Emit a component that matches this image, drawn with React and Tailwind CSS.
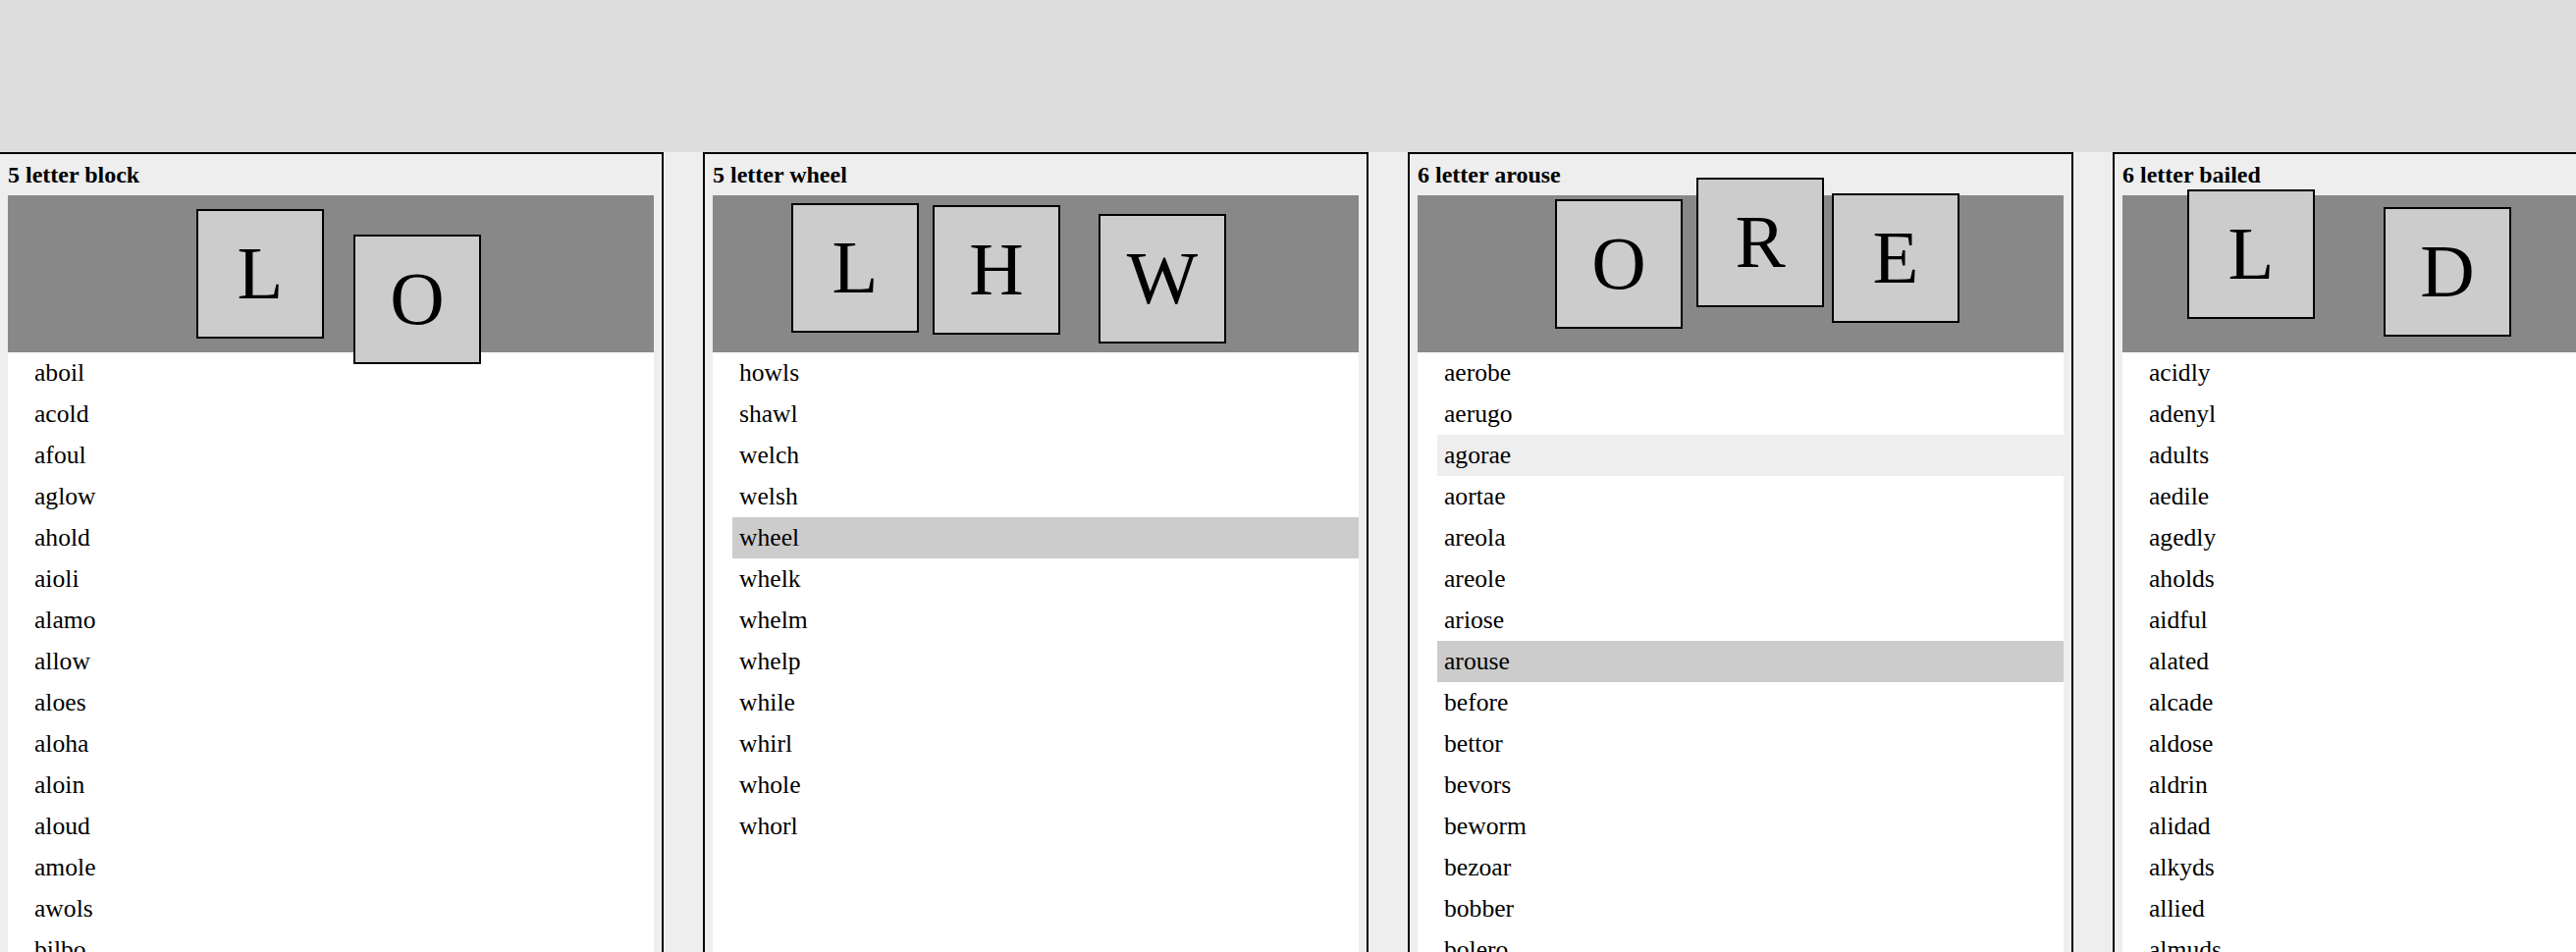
import React from "react";

const panels = [
  {
    title: "5 letter block",
    tiles: [
      { l: "L", x: 192, y: 14 },
      { l: "O", x: 352, y: 40 },
    ],
    words: ["aboil", "acold", "afoul", "aglow", "ahold", "aioli", "alamo", "allow", "aloes", "aloha", "aloin", "aloud", "amole", "awols", "bilbo", "blocs", "bloke"],
    selected: null,
    hover: null,
  },
  {
    title: "5 letter wheel",
    tiles: [
      { l: "L", x: 80, y: 8 },
      { l: "H", x: 224, y: 10 },
      { l: "W", x: 393, y: 19 },
    ],
    words: ["howls", "shawl", "welch", "welsh", "wheel", "whelk", "whelm", "whelp", "while", "whirl", "whole", "whorl"],
    selected: "wheel",
    hover: null,
  },
  {
    title: "6 letter arouse",
    tiles: [
      { l: "O", x: 140, y: 4 },
      { l: "R", x: 284, y: -18 },
      { l: "E", x: 422, y: -2 },
    ],
    words: ["aerobe", "aerugo", "agorae", "aortae", "areola", "areole", "ariose", "arouse", "before", "bettor", "bevors", "beworm", "bezoar", "bobber", "bolero", "borate", "bourse"],
    selected: "arouse",
    hover: "agorae",
  },
  {
    title: "6 letter bailed",
    tiles: [
      { l: "L", x: 66, y: -6 },
      { l: "D", x: 266, y: 12 },
    ],
    words: ["acidly", "adenyl", "adults", "aedile", "agedly", "aholds", "aidful", "alated", "alcade", "aldose", "aldrin", "alidad", "alkyds", "allied", "almuds", "almyra", "amidol"],
    selected: null,
    hover: null,
  },
];

function Tile({ l, x, y }) {
  return (
    <div
      className="absolute w-[130px] h-[132px] border-2 border-black bg-[#cccccc] flex items-center justify-center text-[76.8px] text-black"
      style={{ left: x, top: y }}
    >
      {l}
    </div>
  );
}

function Panel({ p }) {
  return (
    <div className="w-[678px] shrink-0 border-2 border-black bg-[#eeeeee] px-[8px] pt-[8px]">
      <h2 className="text-[24px] font-bold leading-[26px] mb-[8px] text-black">{p.title}</h2>
      <div className="relative h-[160px] bg-[#888888]">
        {p.tiles.map((t, i) => (
          <Tile key={i} {...t} />
        ))}
      </div>
      <ul className="bg-white pl-[20px] h-[800px] overflow-hidden">
        {p.words.map((w) => (
          <li
            key={w}
            className={
              "pl-[7px] h-[42px] leading-[42px] text-[25.6px] text-black " +
              (w === p.selected ? "bg-[#cccccc]" : w === p.hover ? "bg-[#eeeeee]" : "")
            }
          >
            {w}
          </li>
        ))}
      </ul>
    </div>
  );
}

export default function App() {
  return (
    <div className="h-[970px] w-[2624px] overflow-hidden bg-[#eeeeee] font-['Liberation_Serif','Times_New_Roman',serif]">
      <div className="h-[155px] bg-[#dddddd]" />
      <div className="flex gap-[40px] ml-[-2px]">
        {panels.map((p) => (
          <Panel key={p.title} p={p} />
        ))}
      </div>
    </div>
  );
}
